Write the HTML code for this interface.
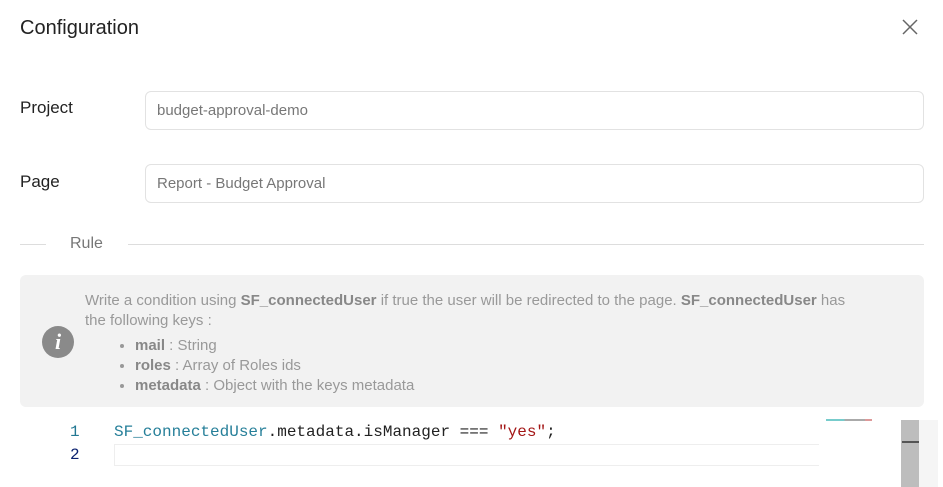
<!DOCTYPE html>
<html><head><style>
body{margin:0;width:943px;height:487px;background:#fff;font-family:"Liberation Sans",sans-serif;position:relative;overflow:hidden}
.a{position:absolute}
.lbl{font-size:17px;color:#222}
.inp{position:absolute;left:145px;width:779px;height:39px;border:1px solid #e2e2e2;border-radius:6px;box-sizing:border-box;font-size:15px;color:#777;padding-left:11px;line-height:38px}
.mono{font-family:"Liberation Mono","DejaVu Sans Mono",monospace;font-size:16px}
</style></head><body>
<div class="a" style="left:20px;top:17px;font-size:20px;color:#222">Configuration</div>
<svg class="a" style="left:901px;top:18px" width="18" height="18" viewBox="0 0 18 18"><path d="M2 2L16 16M16 2L2 16" stroke="#666" stroke-width="1.5"/></svg>
<div class="a lbl" style="left:20px;top:98px">Project</div>
<div class="inp" style="top:91px">budget-approval-demo</div>
<div class="a lbl" style="left:20px;top:172px">Page</div>
<div class="inp" style="top:164px">Report - Budget Approval</div>
<div class="a" style="left:20px;top:244px;width:26px;height:1px;background:#ddd"></div>
<div class="a" style="left:70px;top:235px;font-size:16px;color:#777">Rule</div>
<div class="a" style="left:128px;top:244px;width:796px;height:1px;background:#ddd"></div>
<div class="a" style="left:20px;top:275px;width:904px;height:132px;background:#f2f2f2;border-radius:6px"></div>
<div class="a" style="left:42px;top:326px;width:32px;height:32px;border-radius:50%;background:#8a8a8a;color:#fff;font:italic bold 22px 'Liberation Serif',serif;text-align:center;line-height:32px">i</div>
<div class="a" style="left:85px;top:291px;width:775px;font-size:15px;color:#999;line-height:20px">Write a condition using <b style="color:#888">SF_connectedUser</b> if true the user will be redirected to the page. <b style="color:#888">SF_connectedUser</b> has the following keys :
<ul style="margin:5px 0 0;padding-left:50px">
<li><b style="color:#888">mail</b> : String</li>
<li><b style="color:#888">roles</b> : Array of Roles ids</li>
<li><b style="color:#888">metadata</b> : Object with the keys metadata</li></ul></div>
<div class="a" style="left:114px;top:444px;width:704px;height:20px;border:1px solid #eee;border-right:none"></div>
<div class="a mono" style="left:70px;top:423px;color:#237893">1</div>
<div class="a mono" style="left:70px;top:446px;color:#0b216f">2</div>
<div class="a mono" style="left:114px;top:423px;color:#222"><span style="color:#267f99">SF_connectedUser</span>.metadata.isManager === <span style="color:#a31515">"yes"</span>;</div>
<div class="a" style="left:826px;top:419px;width:46px;height:2px;background:linear-gradient(90deg,#7cc 0 40%,#aaa 40% 85%,#d99 85%)"></div>
<div class="a" style="left:901px;top:420px;width:18px;height:67px;background:#bdbdbd"></div>
<div class="a" style="left:902px;top:441px;width:17px;height:2px;background:#555"></div>
<div class="a" style="left:919px;top:420px;width:19px;height:67px;background:#f5f5f5"></div>
</body></html>
